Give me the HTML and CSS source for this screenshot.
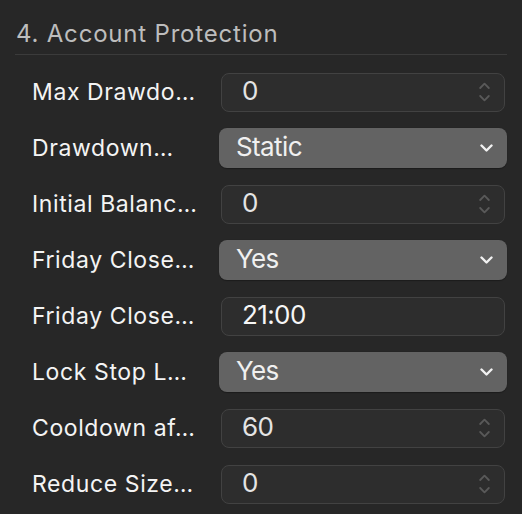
FILE: index.html
```html
<!DOCTYPE html>
<html>
<head>
<meta charset="utf-8">
<link rel="stylesheet" href="styles.css">
</head>
<body>
<div class="panel">
  <div class="title">4. Account Protection</div>
  <div class="rows">
    <div class="row">
      <div class="label">Max Drawdo…</div>
      <div class="field"><span class="value">0</span>
        <svg class="stepper" width="11" height="20" viewBox="0 0 11 20"><path d="M1.2 6 L5.5 1.6 L9.8 6 M1.2 14 L5.5 18.4 L9.8 14" fill="none" stroke="#595959" stroke-width="1.8" stroke-linecap="round" stroke-linejoin="round"/></svg>
      </div>
    </div>
    <div class="row">
      <div class="label">Drawdown…</div>
      <div class="select"><span class="value">Static</span>
        <svg class="chev" width="13" height="8" viewBox="0 0 13 8"><path d="M1.5 1.5 L6.5 6.5 L11.5 1.5" fill="none" stroke="#f2f2f2" stroke-width="2.4" stroke-linecap="round" stroke-linejoin="round"/></svg>
      </div>
    </div>
    <div class="row">
      <div class="label">Initial Balanc…</div>
      <div class="field"><span class="value">0</span>
        <svg class="stepper" width="11" height="20" viewBox="0 0 11 20"><path d="M1.2 6 L5.5 1.6 L9.8 6 M1.2 14 L5.5 18.4 L9.8 14" fill="none" stroke="#595959" stroke-width="1.8" stroke-linecap="round" stroke-linejoin="round"/></svg>
      </div>
    </div>
    <div class="row">
      <div class="label">Friday Close…</div>
      <div class="select"><span class="value">Yes</span>
        <svg class="chev" width="13" height="8" viewBox="0 0 13 8"><path d="M1.5 1.5 L6.5 6.5 L11.5 1.5" fill="none" stroke="#f2f2f2" stroke-width="2.4" stroke-linecap="round" stroke-linejoin="round"/></svg>
      </div>
    </div>
    <div class="row">
      <div class="label">Friday Close…</div>
      <div class="field"><span class="value bright">21:00</span></div>
    </div>
    <div class="row">
      <div class="label">Lock Stop L…</div>
      <div class="select"><span class="value">Yes</span>
        <svg class="chev" width="13" height="8" viewBox="0 0 13 8"><path d="M1.5 1.5 L6.5 6.5 L11.5 1.5" fill="none" stroke="#f2f2f2" stroke-width="2.4" stroke-linecap="round" stroke-linejoin="round"/></svg>
      </div>
    </div>
    <div class="row">
      <div class="label">Cooldown af…</div>
      <div class="field"><span class="value">60</span>
        <svg class="stepper" width="11" height="20" viewBox="0 0 11 20"><path d="M1.2 6 L5.5 1.6 L9.8 6 M1.2 14 L5.5 18.4 L9.8 14" fill="none" stroke="#595959" stroke-width="1.8" stroke-linecap="round" stroke-linejoin="round"/></svg>
      </div>
    </div>
    <div class="row">
      <div class="label">Reduce Size…</div>
      <div class="field"><span class="value">0</span>
        <svg class="stepper" width="11" height="20" viewBox="0 0 11 20"><path d="M1.2 6 L5.5 1.6 L9.8 6 M1.2 14 L5.5 18.4 L9.8 14" fill="none" stroke="#595959" stroke-width="1.8" stroke-linecap="round" stroke-linejoin="round"/></svg>
      </div>
    </div>
  </div>
</div>
</body>
</html>
```

FILE: styles.css
```css
html, body {
  margin: 0;
  padding: 0;
  background: #272727;
  height: 100%;
}
body {
  font-family: Inter, "Open Sans", sans-serif;
  color: #f0f0f0;
}
.panel {
  padding: 0 15px;
}
.title {
  font-size: 24px;
  line-height: 30px;
  letter-spacing: 0.8px;
  color: #bdbdbd;
  padding: 19px 0 5px 1px;
  border-bottom: 1px solid #3b3b3b;
}
.rows {
  padding-top: 9px;
}
.row {
  display: grid;
  grid-template-columns: 204px 288px;
  align-items: center;
  height: 56px;
}
.label {
  padding-left: 17px;
  font-size: 23px;
  letter-spacing: 0.6px;
  color: #f4f4f4;
  white-space: nowrap;
  overflow: hidden;
}
.field {
  margin: 0 2px;
  height: 37px;
  border: 1px solid #424242;
  border-radius: 8px;
  background: #2d2d2d;
  display: flex;
  align-items: center;
  justify-content: space-between;
  padding: 0 14px 0 20px;
}
.select {
  height: 40px;
  border-radius: 8px;
  background: #636363;
  display: flex;
  align-items: center;
  justify-content: space-between;
  padding: 0 14px 0 17px;
  box-shadow: 0 0.5px 1px rgba(0,0,0,0.3);
}
.value {
  font-size: 26px;
  letter-spacing: -0.6px;
  color: #e4e4e4;
  margin-bottom: 3px;
}
.select .value {
  color: #f0f0f0;
}
.value.bright {
  color: #f6f6f6;
}
.stepper, .chev {
  display: block;
}
```
